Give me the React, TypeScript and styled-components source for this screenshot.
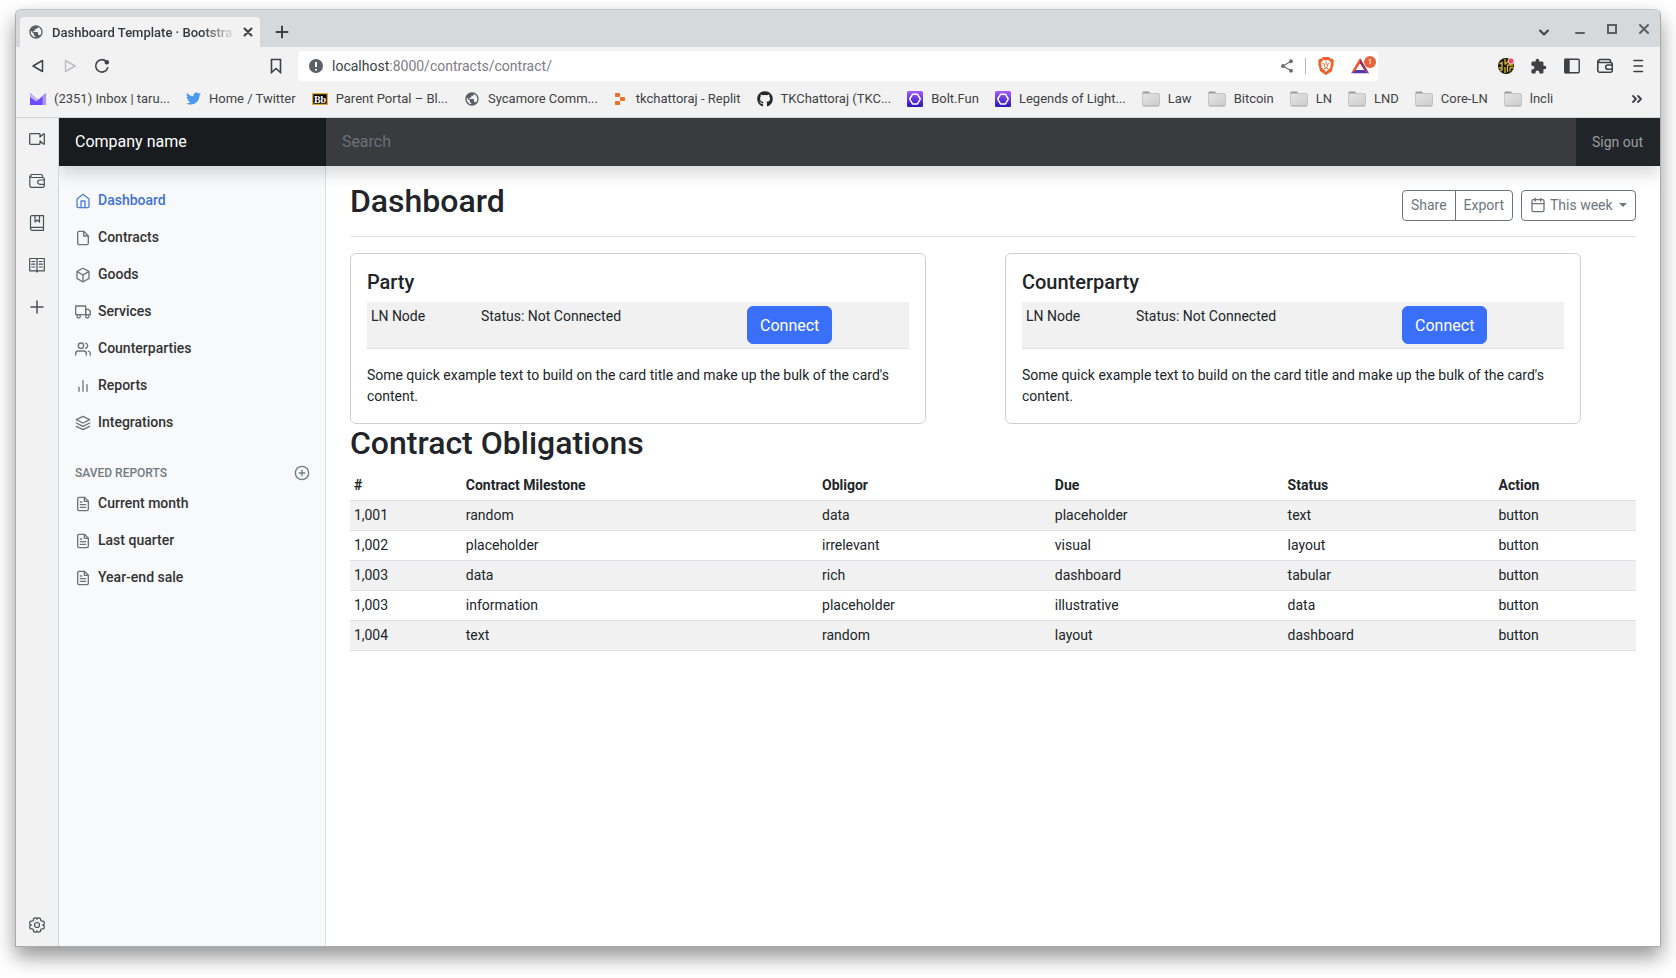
import React from "react";
import styled, { createGlobalStyle, css } from "styled-components";
import {
  FiBarChart2,
  FiBox,
  FiCalendar,
  FiFile,
  FiFileText,
  FiHome,
  FiLayers,
  FiPlusCircle,
  FiTruck,
  FiUsers,
} from "react-icons/fi";
import { FaGithub, FaTwitter } from "react-icons/fa";
import { MdExtension, MdPublic, MdShare } from "react-icons/md";

const GlobalStyle = createGlobalStyle`
  *, *::before, *::after { box-sizing: border-box; }
  body {
    margin: 0;
    background: #fff;
    color: #212529;
    font: 400 14px/21px Roboto, "Liberation Sans", sans-serif;
  }
  button, input, select { font: inherit; color: inherit; }
  button { cursor: pointer; }
  a { color: inherit; text-decoration: none; }
  h1, h2, p, ul { margin: 0; padding: 0; }
  ul { list-style: none; }
  svg { display: block; flex: none; }
`;

/* ---------- browser window ---------- */

const Desktop = styled.div`
  display: flex;
  min-height: 100vh;
  padding: 9px 15px 31px;
`;

const BrowserWindow = styled.div`
  flex: 1;
  min-width: 0;
  display: flex;
  flex-direction: column;
  border: 1px solid #a9abac;
  border-top-color: #c3c5c6;
  border-radius: 6px 6px 0 0;
  background: #f2f2f2;
  box-shadow: 0 10px 20px rgba(0, 0, 0, 0.42);
`;

const TabStrip = styled.div`
  display: flex;
  align-items: center;
  height: 37px;
  padding-left: 4px;
  border-radius: 5px 5px 0 0;
  background: #d5d9dc;
`;

const BareButton = styled.button`
  display: flex;
  align-items: center;
  justify-content: center;
  width: 32px;
  height: 32px;
  flex: none;
  padding: 0;
  border: 0;
  background: none;
  color: #3e4043;
`;

const Tab = styled.div`
  display: flex;
  align-items: center;
  align-self: flex-end;
  width: 240px;
  height: 30px;
  padding-left: 8px;
  border-radius: 4px 4px 0 0;
  background: #f2f2f2;
  color: #5b5f63;
`;

const TabTitle = styled.span`
  flex: 1;
  min-width: 0;
  margin-left: 8px;
  white-space: nowrap;
  font-size: 13px;
  font-weight: 500;
  color: #36393c;
  mask-image: linear-gradient(to right, #000 82%, transparent);
`;

const TabClose = styled(BareButton)`
  width: 24px;
  height: 24px;
`;

const NewTab = styled(BareButton)`
  margin-left: 6px;
  height: 30px;
  align-self: flex-end;
`;

const WindowControls = styled.div`
  display: flex;
  align-items: center;
  margin-left: auto;
`;

const WindowButton = styled(BareButton)`
  color: #5c5e60;
  &:first-child {
    width: 40px;
    color: #3e4043;
  }
`;

const Toolbar = styled.div`
  display: flex;
  align-items: center;
  height: 38px;
  padding: 0 6px;
`;

const ToolGroup = styled.div`
  display: flex;
  align-items: center;
`;

const ExtensionGroup = styled(ToolGroup)`
  margin-left: auto;
  ${BareButton} {
    width: 33px;
  }
`;

const AddressArea = styled.div`
  display: flex;
  align-items: center;
  flex: 0 1 1118px;
  min-width: 0;
  margin-left: 142px;
`;

const AddressBox = styled.div`
  flex: 1;
  min-width: 0;
  display: flex;
  align-items: center;
  height: 30px;
  margin-left: 6px;
  padding-left: 10px;
  border-radius: 4px;
  background: #fff;
`;

const AddressLabel = styled.label`
  display: flex;
  align-items: center;
  flex: 1;
  min-width: 0;
  color: #3c3f42;
`;

const Host = styled.span`
  margin-left: 8px;
`;

const AddressInput = styled.input`
  flex: 1;
  min-width: 0;
  padding: 0;
  border: 0;
  outline: 0;
  background: none;
  color: #7b7d7f;
`;

const AddressDivider = styled.span`
  width: 1px;
  height: 16px;
  margin: 0 4px 0 2px;
  background: #b4b6b8;
`;

const BadgeHolder = styled(BareButton)`
  position: relative;
  width: 36px;
`;

const Badge = styled.span`
  position: absolute;
  top: 6px;
  right: 2px;
  width: 12px;
  height: 12px;
  border-radius: 6px;
  background: #e8623a;
  color: #fff;
  font-size: 8px;
  line-height: 12px;
  text-align: center;
`;

const BookmarkBar = styled.nav`
  display: flex;
  align-items: center;
  height: 33px;
  padding: 0 7px 5px 14px;
  border-bottom: 1px solid #cfd3d6;
`;

const BookmarkList = styled.ul`
  display: flex;
  flex: 1;
  min-width: 0;
  gap: 16px;
  overflow: hidden;
`;

const BookmarkLink = styled.a`
  display: flex;
  align-items: center;
  gap: 8px;
  white-space: nowrap;
  font-size: 13px;
  color: #3f4245;
`;

const BrowserBody = styled.div`
  flex: 1;
  display: flex;
  min-height: 0;
`;

const Rail = styled.aside`
  display: flex;
  flex-direction: column;
  align-items: center;
  gap: 10px;
  width: 43px;
  flex: none;
  padding: 5px 0;
  border-right: 1px solid #d3d5d7;
`;

const RailButton = styled(BareButton)`
  color: #4a5058;
  &:last-child {
    margin-top: auto;
  }
`;

/* ---------- dashboard page ---------- */

const Page = styled.div`
  flex: 1;
  min-width: 0;
  display: flex;
  flex-direction: column;
  overflow: hidden;
  background: #fff;
`;

const Header = styled.header`
  position: relative;
  z-index: 1;
  display: flex;
  height: 48px;
  background: #212529;
  box-shadow: 0 8px 16px rgba(0, 0, 0, 0.15);
  line-height: 24px;
`;

const Brand = styled.a`
  width: 16.67%;
  padding: 12px 16px;
  background: #191c1f;
  box-shadow: inset -1px 0 0 rgba(0, 0, 0, 0.25);
  color: #fff;
  font-size: 16px;
`;

const SearchInput = styled.input`
  flex: 1;
  min-width: 0;
  padding: 12px 16px;
  border: 0;
  outline: 0;
  background: #3a3b3f;
  color: #fff;
  font-size: 16px;
  &::placeholder {
    color: #6c7077;
    opacity: 1;
  }
`;

const SignOut = styled.a`
  min-width: 84px;
  padding: 12px 16px;
  color: #9b9d9f;
`;

const Columns = styled.div`
  flex: 1;
  display: flex;
`;

const Sidebar = styled.nav`
  width: 16.67%;
  flex: none;
  padding-top: 16px;
  border-right: 1px solid #dcdee0;
  background: #f8f9fb;
`;

const NavLink = styled.a<{ $active?: boolean }>`
  display: flex;
  align-items: center;
  gap: 7px;
  padding: 8px 16px;
  font-weight: 500;
  color: ${(p) => (p.$active ? "#3f71d8" : "#333")};
  svg {
    color: ${(p) => (p.$active ? "#4f7fe0" : "#727272")};
  }
`;

const SavedHeading = styled.h2`
  display: flex;
  align-items: center;
  justify-content: space-between;
  margin: 24px 0 4px;
  padding: 0 15px 0 16px;
  color: #727980;
  font-size: 12px;
  font-weight: 500;
  line-height: 16px;
  text-transform: uppercase;
`;

const AddReport = styled(BareButton)`
  width: 16px;
  height: 16px;
  color: #727980;
`;

const Main = styled.main`
  flex: 1;
  min-width: 0;
  padding: 16px 24px;
`;

const TitleBar = styled.div`
  display: flex;
  align-items: center;
  justify-content: space-between;
  margin-bottom: 16px;
  padding-bottom: 8px;
  border-bottom: 1px solid #dee2e6;
`;

const Title = styled.h1`
  margin-bottom: 8px;
  font-size: 32px;
  font-weight: 500;
  line-height: 38px;
`;

const Actions = styled.div`
  display: flex;
  gap: 8px;
`;

const ButtonGroup = styled.div`
  display: flex;
`;

const outline = css`
  height: 31px;
  padding: 0 8px;
  border: 1px solid #6c757d;
  border-radius: 4px;
  background: none;
  color: #6c757d;
`;

const OutlineButton = styled.button`
  ${outline}
  &:first-child {
    border-top-right-radius: 0;
    border-bottom-right-radius: 0;
  }
  &:last-child {
    margin-left: -1px;
    border-top-left-radius: 0;
    border-bottom-left-radius: 0;
  }
`;

const PeriodPicker = styled.label`
  ${outline}
  display: flex;
  align-items: center;
  gap: 4px;
`;

const PeriodSelect = styled.select`
  padding: 0 2px 0 0;
  border: 0;
  outline: 0;
  background: none;
  appearance: none;
`;

const Cards = styled.div`
  display: grid;
  grid-template-columns: 1fr 1fr;
  gap: 24px;
`;

const Card = styled.section`
  max-width: 576px;
  padding: 16px;
  border: 1px solid #d0d1d2;
  border-radius: 6px;
`;

const CardTitle = styled.h2`
  margin-bottom: 8px;
  font-size: 20px;
  font-weight: 500;
  line-height: 24px;
`;

const DataTable = styled.table`
  width: 100%;
  margin-bottom: 16px;
  border-collapse: separate;
  border-spacing: 0;
  table-layout: fixed;
`;

const Col = styled.col<{ $share: number }>`
  width: ${(p) => p.$share}%;
`;

const Cell = styled.td`
  padding: 4px;
  border-bottom: 1px solid #dee2e6;
  vertical-align: top;
`;

const HeadCell = styled(Cell).attrs({ as: "th", scope: "col" })`
  text-align: left;
  font-weight: 700;
`;

const Row = styled.tr`
  &:nth-child(odd) {
    background: #f1f1f1;
  }
`;

const ConnectButton = styled.button`
  display: block;
  height: 38px;
  padding: 0 12px;
  border: 1px solid #3a70f9;
  border-radius: 6px;
  background: #3a70f9;
  color: #fff;
  font-size: 16px;
`;

const SectionTitle = styled.h2`
  margin-bottom: 8px;
  font-size: 32px;
  font-weight: 500;
  line-height: 39px;
`;

/* ---------- icons ---------- */

type LineProps = { size?: number; width?: number; children: React.ReactNode };

const Line = ({ size = 16, width = 1, children }: LineProps) => (
  <svg
    width={size}
    height={size}
    viewBox={`0 0 ${size} ${size}`}
    fill="none"
    stroke="currentColor"
    strokeWidth={width}
    strokeLinejoin="round"
    strokeLinecap="round"
    aria-hidden="true"
  >
    {children}
  </svg>
);

const WalletIcon = ({ width = 1.2 }: { width?: number }) => (
  <Line width={width}>
    <path d="M13.5 4.5V3a1.5 1.5 0 0 0-1.500-1.500H2.500A1.700 1.700 0 0 0 2.500 4.500H13.500a1.800 1.800 0 0 1 1.800 1.800V12.500a1.800 1.800 0 0 1-1.800 1.800H2.600A1.800 1.800 0 0 1 .8 12.500V3" />
    <path d="M15.300 7H10.800a2.100 2.100 0 0 0 0 4.300h4.500" />
  </Line>
);

const MailIcon = () => (
  <svg width="16" height="16" viewBox="0 0 16 16" aria-hidden="true">
    <path d="M0 2l8 7 8-7v12H0z" fill="#6d4aff" />
    <path d="M0 2l8 7-2 1.500L0 6z" fill="#c4b5ff" />
    <path d="M12.500 5L16 2v12h-3.500z" fill="#a995ff" />
  </svg>
);

const BlackboardIcon = () => (
  <svg width="16" height="16" viewBox="0 0 16 16" aria-hidden="true">
    <rect x=".7" y="2.700" width="14.600" height="10.600" fill="#000" stroke="#e8a62c" strokeWidth="1.200" />
    <text x="8" y="11.500" textAnchor="middle" fill="#fff" fontFamily="Liberation Serif, serif" fontWeight="700" fontSize="10">
      Bb
    </text>
  </svg>
);

const ReplitIcon = () => (
  <svg width="14" height="14" viewBox="0 0 14 14" fill="#e8702a" aria-hidden="true">
    <rect x="1" y="1" width="5" height="4" rx=".8" />
    <rect x="6" y="5" width="5" height="4" rx=".8" />
    <rect x="1" y="9" width="5" height="4" rx=".8" />
  </svg>
);

const BoltIcon = ({ id }: { id: string }) => (
  <svg width="16" height="16" viewBox="0 0 16 16" aria-hidden="true">
    <defs>
      <linearGradient id={id} x1="0" y1="0" x2="0" y2="1">
        <stop offset="0" stopColor="#a45cff" />
        <stop offset="1" stopColor="#2a16b8" />
      </linearGradient>
    </defs>
    <rect width="16" height="16" rx="1.500" fill={`url(#${id})`} />
    <path d="M5.500 3.300h5L13.300 8l-2.800 4.900h-5L2.700 8z" fill="none" stroke="#fff" strokeWidth="1.500" strokeLinejoin="round" />
  </svg>
);

const FolderIcon = () => (
  <svg width="18" height="16" viewBox="0 0 18 16" aria-hidden="true">
    <defs>
      <linearGradient id="folder" x1="0" y1="0" x2="1" y2="1">
        <stop offset="0" stopColor="#e4e4e4" />
        <stop offset="1" stopColor="#cdcdcd" />
      </linearGradient>
    </defs>
    <path d="M.5 4V1.600a1 1 0 0 1 1-1h5.200a1 1 0 0 1 1 1V3z" fill="#9c9c9c" />
    <rect x=".5" y="2.500" width="17" height="12.300" rx="1.200" fill="url(#folder)" stroke="#bdbdbd" strokeWidth=".8" />
    <path d="M1 15h16" stroke="#a5a5a5" strokeWidth=".8" />
  </svg>
);

const BraveIcon = () => (
  <svg width="16" height="18" viewBox="0 0 16 18" aria-hidden="true">
    <path d="M5 0h6l1.600 1.800 1.600-.2L16 4l-.6 1.500.4 1.500-2 7.200L8 18l-5.800-3.800L.2 7l.4-1.500L0 4l1.800-2.400 1.600.2z" fill="#f0602a" />
    <path d="M8 3.400l2.500-.7 2.800 3.200-1 3.200.4 1.400-2.300 1.800L8 15l-2.400-2.700-2.300-1.800.4-1.400-1-3.200 2.800-3.200z" fill="#fff" />
    <path d="M4.300 6.500l2.500.8-.6 2 1.800 1.500 1.800-1.500-.6-2 2.500-.8M6 11.800l2-.9 2 .9M8 4.500v3" fill="none" stroke="#f0602a" strokeWidth=".9" />
  </svg>
);

const RewardsIcon = () => (
  <svg width="18" height="16" viewBox="0 0 18 16" aria-hidden="true">
    <path d="M9 0v5.200L4.800 12 0 15.300z" fill="#f0562e" />
    <path d="M9 0l9 15.300-4.800-3.300L9 5.200z" fill="#982a62" />
    <path d="M0 15.300L4.800 12h8.400l4.800 3.300z" fill="#5b36a8" />
  </svg>
);

const ProfileIcon = () => (
  <svg width="18" height="18" viewBox="0 0 18 18" aria-hidden="true">
    <circle cx="9" cy="9" r="8" fill="#17150b" />
    <path d="M5 4.500v9M8 2v5.500M8 10v6M10.500 8v7M2.500 6.500H5M2 11h3M8 7.500l3-3M10.500 8H16M13 10.500v4M13 10.500h3.500M3 13.500h2" fill="none" stroke="#d7b82e" strokeWidth="1.300" />
    <circle cx="14" cy="4" r="3" fill="#f0485f" stroke="#f2f2f2" strokeWidth=".8" />
  </svg>
);

const InfoIcon = () => (
  <svg width="16" height="16" viewBox="0 0 16 16" aria-hidden="true">
    <circle cx="8" cy="8" r="7" fill="#5b5f66" />
    <path d="M8 4v5M8 11v1.500" stroke="#fff" strokeWidth="2" />
  </svg>
);

const GearIcon = () => (
  <Line width={1.2}>
    <circle cx="8" cy="8" r="2.500" />
    <path d="M6.200.8h.9L8 2.200 8.900.8h.9l1.700.8.1 1.900 1.600.7 1.600.1.500 1.600v1L13.700 8l1.600 1.100v1l-.5 1.600-1.600.1-1.600.7-.1 1.900-1.700.8h-.9L8 13.800l-.9 1.400h-.9l-1.700-.8-.1-1.900-1.600-.7-1.600-.1-.5-1.600v-1L2.300 8 .7 6.900v-1l.5-1.600 1.600-.1 1.600-.7.1-1.900z" />
  </Line>
);

/* ---------- data ---------- */

const bookmarks: { icon: React.ReactNode; label: string }[] = [
  { icon: <MailIcon />, label: "(2351) Inbox | taru..." },
  { icon: <FaTwitter size={15} color="#4a99ea" />, label: "Home / Twitter" },
  { icon: <BlackboardIcon />, label: "Parent Portal – Bl..." },
  { icon: <MdPublic size={16} color="#5b5f66" />, label: "Sycamore Comm..." },
  { icon: <ReplitIcon />, label: "tkchattoraj - Replit" },
  { icon: <FaGithub size={16} color="#24292e" />, label: "TKChattoraj (TKC..." },
  { icon: <BoltIcon id="bolt-a" />, label: "Bolt.Fun" },
  { icon: <BoltIcon id="bolt-b" />, label: "Legends of Light..." },
  ...["Law", "Bitcoin", "LN", "LND", "Core-LN", "lncli"].map((label) => ({
    icon: <FolderIcon />,
    label,
  })),
];

const navItems = [
  { icon: FiHome, label: "Dashboard" },
  { icon: FiFile, label: "Contracts" },
  { icon: FiBox, label: "Goods" },
  { icon: FiTruck, label: "Services" },
  { icon: FiUsers, label: "Counterparties" },
  { icon: FiBarChart2, label: "Reports" },
  { icon: FiLayers, label: "Integrations" },
];

const savedReports = ["Current month", "Last quarter", "Year-end sale"];

const headings = ["#", "Contract Milestone", "Obligor", "Due", "Status", "Action"];
const shares = [8.7, 27.7, 18.1, 18.1, 16.4, 11];

const obligations = [
  ["1,001", "random", "data", "placeholder", "text", "button"],
  ["1,002", "placeholder", "irrelevant", "visual", "layout", "button"],
  ["1,003", "data", "rich", "dashboard", "tabular", "button"],
  ["1,003", "information", "placeholder", "illustrative", "data", "button"],
  ["1,004", "text", "random", "layout", "dashboard", "button"],
];

/* ---------- parts ---------- */

function Tabs() {
  return (
    <TabStrip>
      <Tab>
        <MdPublic size={16} />
        <TabTitle>Dashboard Template · Bootstra</TabTitle>
        <TabClose aria-label="Close tab">
          <Line width={2}>
            <path d="M4.500 4.500l7 7M11.500 4.500l-7 7" />
          </Line>
        </TabClose>
      </Tab>
      <NewTab aria-label="New tab">
        <Line width={2}>
          <path d="M8 2.500v11M2.500 8h11" />
        </Line>
      </NewTab>
      <WindowControls>
        <WindowButton aria-label="Search tabs">
          <Line width={2}>
            <path d="M4 9.500l4 4 4-4" />
          </Line>
        </WindowButton>
        <WindowButton aria-label="Minimize">
          <Line width={2}>
            <path d="M4 12h8" />
          </Line>
        </WindowButton>
        <WindowButton aria-label="Maximize">
          <svg width="10" height="10" viewBox="0 0 10 10" aria-hidden="true">
            <rect x="1" y="1" width="8" height="8" fill="none" stroke="currentColor" strokeWidth="2" />
          </svg>
        </WindowButton>
        <WindowButton aria-label="Close window">
          <Line width={2}>
            <path d="M4 4l8 8M12 4l-8 8" />
          </Line>
        </WindowButton>
      </WindowControls>
    </TabStrip>
  );
}

function Navigation() {
  return (
    <Toolbar>
      <ToolGroup>
        <BareButton aria-label="Back">
          <Line width={1.5}>
            <path d="M12.500 2.500v11L3 8z" />
          </Line>
        </BareButton>
        <BareButton aria-label="Forward" disabled>
          <svg width="16" height="16" viewBox="0 0 16 16" fill="none" stroke="#bdbfc1" strokeWidth="1.500" strokeLinejoin="round" aria-hidden="true">
            <path d="M3.500 2.500v11L13 8z" />
          </svg>
        </BareButton>
        <BareButton aria-label="Reload">
          <Line width={1.6}>
            <path d="M13.800 9.800A6.200 6.200 0 1 1 12.300 3.500" />
            <circle cx="12.800" cy="4.200" r="1.500" fill="currentColor" />
          </Line>
        </BareButton>
      </ToolGroup>
      <AddressArea>
        <BareButton aria-label="Bookmark this page">
          <Line width={1.6}>
            <path d="M3.500 1.500h9v13L8 10.500l-4.500 4z" strokeLinejoin="miter" />
          </Line>
        </BareButton>
        <AddressBox>
          <AddressLabel>
            <InfoIcon />
            <Host>localhost</Host>
            <AddressInput aria-label="Address" defaultValue=":8000/contracts/contract/" />
          </AddressLabel>
          <BareButton aria-label="Share this page">
            <MdShare size={16} color="#6d7073" />
          </BareButton>
          <AddressDivider />
          <BareButton aria-label="Shields">
            <BraveIcon />
          </BareButton>
          <BadgeHolder aria-label="Rewards">
            <RewardsIcon />
            <Badge>1</Badge>
          </BadgeHolder>
        </AddressBox>
      </AddressArea>
      <ExtensionGroup>
        <BareButton aria-label="Profile">
          <ProfileIcon />
        </BareButton>
        <BareButton aria-label="Extensions">
          <MdExtension size={17} />
        </BareButton>
        <BareButton aria-label="Side panel">
          <Line width={1.4}>
            <rect x=".8" y="1.300" width="14.400" height="13.400" rx="1" />
            <path d="M1 1.500h4v13H1z" fill="currentColor" />
          </Line>
        </BareButton>
        <BareButton aria-label="Wallet">
          <WalletIcon width={1.6} />
        </BareButton>
        <BareButton aria-label="Menu">
          <Line width={1.6}>
            <path d="M4 2.500h8.500M4 8h8.500M4 13.500h8.500" />
          </Line>
        </BareButton>
      </ExtensionGroup>
    </Toolbar>
  );
}

function PartyCard({ name }: { name: string }) {
  return (
    <Card>
      <CardTitle>{name}</CardTitle>
      <DataTable aria-label={`${name} node`}>
        <colgroup>
          <Col $share={20.3} />
          <Col $share={49.1} />
          <Col $share={30.6} />
        </colgroup>
        <tbody>
          <Row>
            <Cell>LN Node</Cell>
            <Cell>Status: Not Connected</Cell>
            <Cell>
              <ConnectButton>Connect</ConnectButton>
            </Cell>
          </Row>
        </tbody>
      </DataTable>
      <p>
        Some quick example text to build on the card title and make up the bulk of the card's content.
      </p>
    </Card>
  );
}

function Dashboard() {
  return (
    <Page>
      <Header>
        <Brand href="#">Company name</Brand>
        <SearchInput type="text" placeholder="Search" aria-label="Search" />
        <SignOut href="#">Sign out</SignOut>
      </Header>
      <Columns>
        <Sidebar aria-label="Dashboard sections">
          <ul>
            {navItems.map(({ icon: Icon, label }, i) => (
              <li key={label}>
                <NavLink href="#" $active={i === 0}>
                  <Icon size={16} />
                  {label}
                </NavLink>
              </li>
            ))}
          </ul>
          <SavedHeading>
            Saved reports
            <AddReport aria-label="Add a new report">
              <FiPlusCircle size={16} />
            </AddReport>
          </SavedHeading>
          <ul>
            {savedReports.map((label) => (
              <li key={label}>
                <NavLink href="#">
                  <FiFileText size={16} />
                  {label}
                </NavLink>
              </li>
            ))}
          </ul>
        </Sidebar>
        <Main>
          <TitleBar>
            <Title>Dashboard</Title>
            <Actions>
              <ButtonGroup>
                <OutlineButton>Share</OutlineButton>
                <OutlineButton>Export</OutlineButton>
              </ButtonGroup>
              <PeriodPicker>
                <FiCalendar size={16} />
                <PeriodSelect aria-label="Period">
                  <option>This week</option>
                </PeriodSelect>
                <svg width="8" height="4" viewBox="0 0 8 4" fill="currentColor" aria-hidden="true">
                  <path d="M0 0h8L4 4z" />
                </svg>
              </PeriodPicker>
            </Actions>
          </TitleBar>
          <Cards>
            <PartyCard name="Party" />
            <PartyCard name="Counterparty" />
          </Cards>
          <SectionTitle>Contract Obligations</SectionTitle>
          <DataTable>
            <colgroup>
              {shares.map((share, i) => (
                <Col key={i} $share={share} />
              ))}
            </colgroup>
            <thead>
              <tr>
                {headings.map((h) => (
                  <HeadCell key={h}>{h}</HeadCell>
                ))}
              </tr>
            </thead>
            <tbody>
              {obligations.map((row, r) => (
                <Row key={r}>
                  {row.map((value, c) => (
                    <Cell key={c}>{value}</Cell>
                  ))}
                </Row>
              ))}
            </tbody>
          </DataTable>
        </Main>
      </Columns>
    </Page>
  );
}

export default function App() {
  return (
    <>
      <GlobalStyle />
      <Desktop>
        <BrowserWindow>
          <Tabs />
          <Navigation />
          <BookmarkBar aria-label="Bookmarks">
            <BookmarkList>
              {bookmarks.map(({ icon, label }) => (
                <li key={label}>
                  <BookmarkLink href="#">
                    {icon}
                    {label}
                  </BookmarkLink>
                </li>
              ))}
            </BookmarkList>
            <BareButton aria-label="More bookmarks">
              <Line width={1.8}>
                <path d="M4 5l3 3-3 3M9 5l3 3-3 3" />
              </Line>
            </BareButton>
          </BookmarkBar>
          <BrowserBody>
            <Rail aria-label="Browser side panel">
              <RailButton aria-label="Talk">
                <Line width={1.3}>
                  <path d="M11 6V3.500a.8.8 0 0 0-.8-.8H1.500a.8.800 0 0 0-.8.800v9a.8.800 0 0 0 .8.800h8.700a.8.800 0 0 0 .8-.8V10l3 2.800 1.300.3V2.900l-1.300.300z" />
                </Line>
              </RailButton>
              <RailButton aria-label="Wallet">
                <WalletIcon />
              </RailButton>
              <RailButton aria-label="Bookmarks">
                <Line width={1.2}>
                  <path d="M14.500 12.300H3a1.500 1.500 0 0 0 0 3h11.500M1.500 13.800V2A1.300 1.300 0 0 1 2.800.7h11.700v14.600M6 1v6l2.200-2 2.300 2V1" />
                </Line>
              </RailButton>
              <RailButton aria-label="Reading list">
                <Line width={1.2}>
                  <path d="M.7 1.500h6.500l.8.600.8-.6h6.500v12.300H8.800L8 15l-.8-1.200H.7zM8 2v13M2.800 4.500h3M2.800 7.200h3M2.800 10h3M10.200 4.500h3M10.200 7.200h3M10.200 10h3" />
                </Line>
              </RailButton>
              <RailButton aria-label="Add to panel">
                <Line width={1.5}>
                  <path d="M8 2v12M2 8h12" />
                </Line>
              </RailButton>
              <RailButton aria-label="Settings">
                <GearIcon />
              </RailButton>
            </Rail>
            <Dashboard />
          </BrowserBody>
        </BrowserWindow>
      </Desktop>
    </>
  );
}
